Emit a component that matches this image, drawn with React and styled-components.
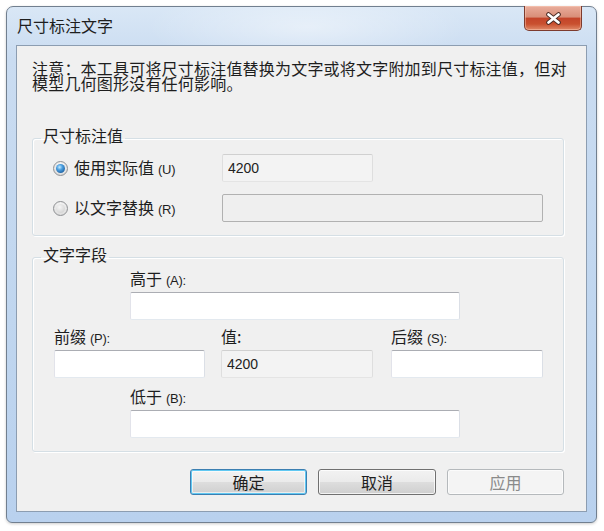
import styled, { createGlobalStyle } from "styled-components";

const GlobalStyle = createGlobalStyle`
  html, body {
    margin: 0;
    padding: 0;
    background: #fff;
  }
  body {
    font-family: "Noto Sans CJK SC", "Liberation Sans", sans-serif;
    color: #1e1e1e;
  }
`;

const Page = styled.div`
  padding: 6px 7px 8px 6px;
`;

// Aero style window frame
const Window = styled.div`
  width: 591px;
  height: 517px;
  box-sizing: border-box;
  border: 1px solid #717f8f;
  border-radius: 7px 7px 6px 6px;
  background:
    radial-gradient(ellipse 160px 40px at 300px 20px, rgba(255, 255, 255, 0.45), transparent),
    linear-gradient(180deg, #d9e7f6 0%, #cadcf1 10%, #c0d6ef 60%, #b9d1ee 100%);
  padding: 0 9px 10px;
  display: flex;
  flex-direction: column;
  box-shadow: 0 1px 3px rgba(0, 0, 0, 0.2);
`;

const TitleBar = styled.div`
  height: 38px;
  display: flex;
  justify-content: space-between;
  align-items: flex-start;
  flex-shrink: 0;
`;

const Title = styled.div`
  margin-top: 10px;
  padding-left: 1px;
  font-size: 16px;
  line-height: 16px;
  color: #1e1e1e;
`;

const CloseButton = styled.div`
  width: 58px;
  height: 25px;
  margin-top: -1px;
  margin-right: 5px;
  box-sizing: border-box;
  border: 1px solid #7d3b2e;
  border-top: none;
  border-radius: 0 0 5px 5px;
  background: linear-gradient(180deg, #e9ad9c 0%, #d98f79 45%, #c4452a 52%, #c9502f 75%, #e08a69 100%);
  box-shadow: inset 0 0 0 1px rgba(255, 210, 190, 0.45);
  display: flex;
  align-items: center;
  justify-content: center;
`;

const Client = styled.div`
  flex: 1;
  min-height: 0;
  border: 1px solid #8c9db1;
  background: #f0f0f0;
  padding: 15px 22px 15px 15px;
  display: flex;
  flex-direction: column;
`;

const Note = styled.p`
  margin: 0 -8px 0 0;
  font-size: 16px;
  line-height: 15px;
  letter-spacing: 0.2px;
`;

const Group = styled.fieldset`
  margin: ${(p) => p.$top}px 0 0;
  padding: ${(p) => p.$pad};
  min-width: 0;
  border: 1px solid #d5dfe5;
  border-radius: 3px;
  box-shadow: inset 1px 1px 0 #fff, 1px 1px 0 #fff;
`;

const Legend = styled.legend`
  margin-left: ${(p) => p.$shift}px;
  padding: 0 2px 6px;
  font-size: 16px;
  line-height: 16px;
`;

const RadioRow = styled.div`
  display: grid;
  grid-template-columns: 169px auto;
  align-items: center;
  height: 28px;
  & + & {
    margin-top: 12px;
  }
`;

const RadioLabel = styled.label`
  display: flex;
  align-items: center;
  gap: 6px;
  font-size: 16px;
  line-height: 16px;
  height: 16px;
`;

const Radio = styled.span`
  position: relative;
  width: 15px;
  height: 15px;
  box-sizing: border-box;
  border-radius: 50%;
  border: 1px solid #8f9194;
  background: radial-gradient(circle at 50% 35%, #ffffff 0%, #e4e4e4 60%, #cfcfcf 100%);
  &::after {
    content: "";
    position: absolute;
    left: 2px;
    top: 2px;
    width: 9px;
    height: 9px;
    border-radius: 50%;
    background: ${(p) =>
      p.$checked
        ? "radial-gradient(circle at 40% 35%, #c6ecff 0%, #4b9fe0 35%, #1d5e9e 80%, #123f70 100%)"
        : "radial-gradient(circle at 40% 35%, #f6f6f6 0%, #dcdcdc 60%, #c9c9c9 100%)"};
  }
`;

const Hotkey = styled.span`
  font-family: "Liberation Sans", sans-serif;
  font-size: 13px;
  line-height: 16px;
  margin-left: 4px;
  letter-spacing: -0.3px;
`;

const TextBox = styled.input`
  box-sizing: border-box;
  width: ${(p) => p.$w}px;
  height: 28px;
  margin: 0;
  padding: 0 5px;
  border: 1px solid;
  border-color: #abadb3 #dbdfe6 #e3e9ef #e2e3ea;
  border-radius: 2px;
  background: #fff;
  font-family: "Liberation Sans", sans-serif;
  font-size: 14px;
  color: #222;
  outline: none;
  ${(p) =>
    p.$variant === "readonly" &&
    `
    background: #f3f3f3;
    border-color: #d0d0d0 #dedede #e4e4e4 #dedede;
  `}
  ${(p) =>
    p.$variant === "disabled" &&
    `
    background: #efefef;
    border-color: #b1b1b1;
  `}
`;

const Fields = styled.div`
  display: flex;
  flex-direction: column;
`;

const Field = styled.div`
  display: flex;
  flex-direction: column;
  gap: 6px;
  margin-left: ${(p) => p.$indent || 0}px;
  margin-top: ${(p) => p.$top || 0}px;
`;

const FieldLabel = styled.div`
  display: flex;
  align-items: baseline;
  height: 16px;
  font-size: 16px;
  line-height: 16px;
`;

const FieldRow = styled.div`
  display: flex;
  margin-top: 8px;
  gap: ${(p) => p.$gap}px;
`;

const ButtonRow = styled.div`
  display: flex;
  justify-content: flex-end;
  gap: 11px;
  margin-top: 17px;
`;

const Button = styled.button`
  width: ${(p) => p.$w}px;
  height: 26px;
  padding: 0;
  border: 1px solid #707070;
  border-radius: 3px;
  background: linear-gradient(180deg, #f2f2f2 0%, #ebebeb 48%, #dddddd 52%, #cfcfcf 100%);
  box-shadow: inset 0 0 0 1px rgba(255, 255, 255, 0.75);
  font-family: "Noto Sans CJK SC", sans-serif;
  font-size: 16px;
  line-height: 16px;
  color: #1e1e1e;
  ${(p) =>
    p.$default &&
    `
    border-color: #3c7fb1;
    box-shadow: inset 0 0 0 1px #60c8f2, inset 0 0 0 2px rgba(255,255,255,0.6);
  `}
  &:disabled {
    border-color: #b5b9bc;
    background: #f4f4f4;
    box-shadow: inset 0 0 0 1px #fbfbfb;
    color: #8a8a8a;
  }
`;

export default function App() {
  return (
    <>
      <GlobalStyle />
      <Page>
        <Window>
          <TitleBar>
            <Title>尺寸标注文字</Title>
            <CloseButton>
              <svg width="17" height="13" viewBox="0 0 17 13">
                <path d="M3.5 2.5 L13.5 10.5 M13.5 2.5 L3.5 10.5" stroke="#4a2a24" strokeWidth="4.6" strokeLinecap="round" />
                <path d="M3.5 2.5 L13.5 10.5 M13.5 2.5 L3.5 10.5" stroke="#ffffff" strokeWidth="2.8" strokeLinecap="round" />
              </svg>
            </CloseButton>
          </TitleBar>
          <Client>
            <Note>注意：本工具可将尺寸标注值替换为文字或将文字附加到尺寸标注值，但对模型几何图形没有任何影响。</Note>

            <Group $top={36} $pad="5px 0 13px 20px">
              <Legend $shift={-12}>尺寸标注值</Legend>
              <RadioRow>
                <RadioLabel>
                  <Radio $checked />
                  <span>使用实际值<Hotkey>(U)</Hotkey></span>
                </RadioLabel>
                <TextBox $w={151} $variant="readonly" value="4200" readOnly />
              </RadioRow>
              <RadioRow>
                <RadioLabel>
                  <Radio />
                  <span>以文字替换<Hotkey>(R)</Hotkey></span>
                </RadioLabel>
                <TextBox $w={321} $variant="disabled" value="" readOnly />
              </RadioRow>
            </Group>

            <Group $top={10} $pad="2px 0 13px 21px">
              <Legend $shift={-13}>文字字段</Legend>
              <Fields>
                <Field $indent={76}>
                  <FieldLabel>高于<Hotkey>(A):</Hotkey></FieldLabel>
                  <TextBox $w={330} value="" readOnly />
                </Field>
                <FieldRow $gap={16}>
                  <Field>
                    <FieldLabel>前缀<Hotkey>(P):</Hotkey></FieldLabel>
                    <TextBox $w={151} value="" readOnly />
                  </Field>
                  <Field>
                    <FieldLabel>值:</FieldLabel>
                    <TextBox $w={152} $variant="readonly" value="4200" readOnly />
                  </Field>
                  <Field $indent={2}>
                    <FieldLabel>后缀<Hotkey>(S):</Hotkey></FieldLabel>
                    <TextBox $w={152} value="" readOnly />
                  </Field>
                </FieldRow>
                <Field $indent={76} $top={10}>
                  <FieldLabel>低于<Hotkey>(B):</Hotkey></FieldLabel>
                  <TextBox $w={330} value="" readOnly />
                </Field>
              </Fields>
            </Group>

            <ButtonRow>
              <Button $w={117} $default>确定</Button>
              <Button $w={118}>取消</Button>
              <Button $w={117} disabled>应用</Button>
            </ButtonRow>
          </Client>
        </Window>
      </Page>
    </>
  );
}
